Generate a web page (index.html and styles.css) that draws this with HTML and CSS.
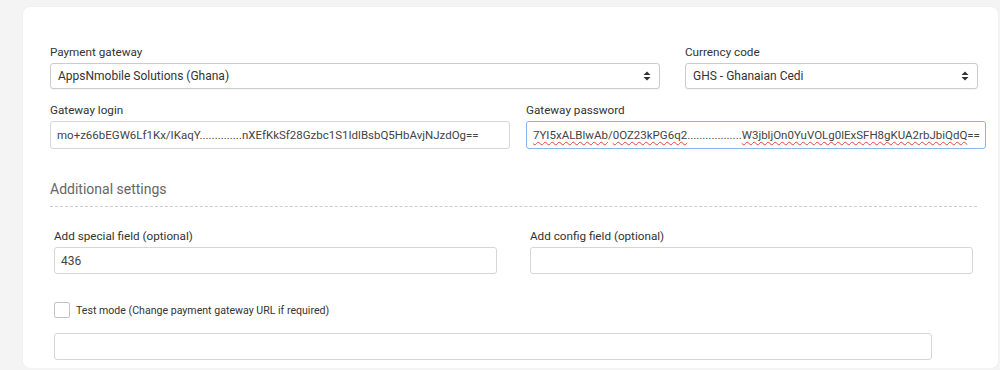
FILE: index.html
```html
<!DOCTYPE html>
<html lang="en">
<head>
  <meta charset="UTF-8">
  <title>Payment gateway settings</title>
  <link rel="stylesheet" href="styles.css">
</head>
<body>
  <div class="tarjeta">
    <div class="fila fila-select">
      <div class="campo">
        <label>Payment gateway</label>
        <div class="select">
          <span>AppsNmobile Solutions (Ghana)</span>
          <svg class="flechas" width="8" height="10" viewBox="0 0 8 10"><path d="M0.5 4 L4 0.5 L7.5 4 Z M0.5 6 L4 9.5 L7.5 6 Z" fill="#333"/></svg>
        </div>
      </div>
      <div class="campo">
        <label>Currency code</label>
        <div class="select">
          <span>GHS - Ghanaian Cedi</span>
          <svg class="flechas" width="8" height="10" viewBox="0 0 8 10"><path d="M0.5 4 L4 0.5 L7.5 4 Z M0.5 6 L4 9.5 L7.5 6 Z" fill="#333"/></svg>
        </div>
      </div>
    </div>

    <div class="fila fila-gateway">
      <div class="campo">
        <label>Gateway login</label>
        <div class="entrada">mo+z66bEGW6Lf1Kx/IKaqY..............nXEfKkSf28Gzbc1S1IdlBsbQ5HbAvjNJzdOg==</div>
      </div>
      <div class="campo">
        <label>Gateway password</label>
        <div class="entrada activa"><span class="error">7YI5xALBlwAb</span>/<span class="error">0OZ23kPG6q2</span>..................<span class="error">W3jbljOn0YuVOLg0lExSFH8gKUA2rbJbiQdQ</span>==</div>
      </div>
    </div>

    <h4 class="subtitulo">Additional settings</h4>

    <div class="extra">
      <div class="fila fila-extra">
        <div class="campo">
          <label>Add special field (optional)</label>
          <div class="entrada">436</div>
        </div>
        <div class="campo">
          <label>Add config field (optional)</label>
          <div class="entrada"></div>
        </div>
      </div>

      <div class="check">
        <span class="caja"></span>
        <span>Test mode (Change payment gateway URL if required)</span>
      </div>

      <div class="entrada url"></div>
    </div>
  </div>
</body>
</html>
```

FILE: styles.css
```css
body {
  margin: 0;
  background-color: #f4f4f4;
  font-family: Roboto, "Noto Sans", sans-serif;
  color: #333;
  overflow: hidden;
}

.tarjeta {
  margin: 7px 2px 0 23px;
  background-color: #fff;
  border-radius: 7px;
  padding: 37px 0 0 27px;
  height: 361px;
  box-sizing: border-box;
  box-shadow: 0 0 2px rgba(0, 0, 0, 0.06);
}

.fila {
  display: flex;
}

.campo label {
  display: block;
  font-size: 11.7px;
  line-height: 16px;
  margin-bottom: 3px;
  color: #333;
}

.fila-select .campo:first-child {
  width: 610px;
  margin-right: 25px;
}

.fila-select .campo:last-child {
  width: 293px;
}

.select {
  height: 26px;
  box-sizing: border-box;
  border: 1px solid #ccc;
  border-radius: 3px;
  display: flex;
  align-items: center;
  justify-content: space-between;
  padding: 0 8px 0 7px;
  font-size: 12px;
  color: #333;
  box-shadow: 0 1px 1px rgba(0, 0, 0, 0.05);
}

.flechas {
  display: block;
}

.fila-gateway {
  margin-top: 13px;
}

.fila-gateway .campo {
  width: 460px;
}

.fila-gateway .campo:first-child {
  margin-right: 16px;
}

.entrada {
  height: 28px;
  box-sizing: border-box;
  border: 1px solid #d6d6d6;
  border-radius: 3px;
  padding: 0 6px;
  display: flex;
  align-items: center;
  font-size: 11.5px;
  color: #444;
  white-space: nowrap;
  overflow: hidden;
}

.entrada.activa {
  border-color: #8ab4f0;
}

.error {
  text-decoration: underline wavy #e0433a;
  text-decoration-thickness: 1px;
  text-underline-offset: 2px;
}

.subtitulo {
  margin: 31px 0 0 0;
  width: 927px;
  font-weight: normal;
  font-size: 14px;
  line-height: 18px;
  color: #666;
  padding-bottom: 8px;
  border-bottom: 1px dashed #ccc;
}

.extra {
  padding-left: 4px;
}

.fila-extra {
  margin-top: 21px;
}

.fila-extra .campo {
  width: 443px;
}

.fila-extra .campo:first-child {
  margin-right: 33px;
}

.fila-extra .entrada {
  height: 27px;
  font-size: 12px;
}

.check {
  display: flex;
  align-items: center;
  margin-top: 28px;
  font-size: 10.6px;
  color: #333;
}

.caja {
  width: 14px;
  height: 14px;
  border: 1px solid #c4c4c4;
  border-radius: 2px;
  margin-right: 6px;
}

.entrada.url {
  width: 878px;
  height: 27px;
  margin-top: 15px;
}
```
